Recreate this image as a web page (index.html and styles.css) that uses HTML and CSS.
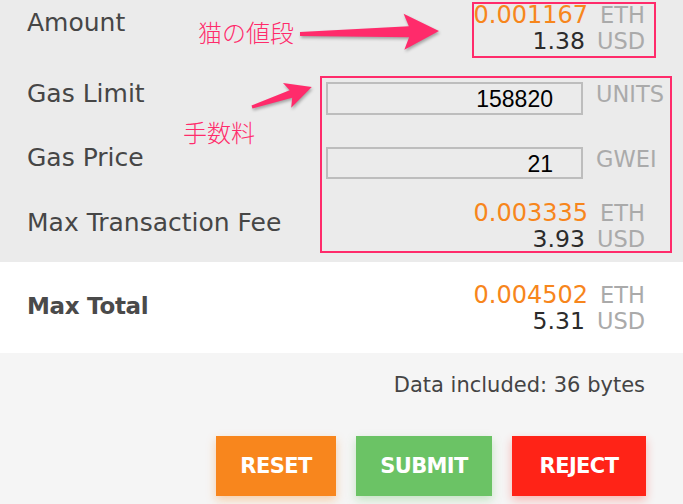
FILE: index.html
```html
<!DOCTYPE html>
<html lang="ja">
<head>
<meta charset="utf-8">
<title>Confirm Transaction</title>
<link rel="stylesheet" href="styles.css">
</head>
<body>
<div class="page">
  <section class="details">
    <div class="row row-amount">
      <div class="label">Amount</div>
      <div class="values">
        <div class="line"><span class="eth">0.001167</span><span class="unit">ETH</span></div>
        <div class="line"><span class="usd">1.38</span><span class="unit">USD</span></div>
      </div>
    </div>
    <div class="row row-input">
      <div class="label">Gas Limit</div>
      <div class="input-group">
        <input class="field" type="text" value="158820">
        <span class="unit unit-side">UNITS</span>
      </div>
    </div>
    <div class="row row-input row-price">
      <div class="label">Gas Price</div>
      <div class="input-group">
        <input class="field" type="text" value="21">
        <span class="unit unit-side">GWEI</span>
      </div>
    </div>
    <div class="row row-fee">
      <div class="label">Max Transaction Fee</div>
      <div class="values">
        <div class="line"><span class="eth">0.003335</span><span class="unit">ETH</span></div>
        <div class="line"><span class="usd">3.93</span><span class="unit">USD</span></div>
      </div>
    </div>
  </section>

  <section class="total">
    <div class="label label-bold">Max Total</div>
    <div class="values values-total">
      <div class="line"><span class="eth">0.004502</span><span class="unit">ETH</span></div>
      <div class="line"><span class="usd">5.31</span><span class="unit">USD</span></div>
    </div>
  </section>

  <section class="footer">
    <div class="data-info">Data included: 36 bytes</div>
    <div class="buttons">
      <button class="btn btn-reset">RESET</button>
      <button class="btn btn-submit">SUBMIT</button>
      <button class="btn btn-reject">REJECT</button>
    </div>
  </section>

  <!-- annotation layer -->
  <div class="note-box note-box-amount"></div>
  <div class="note-box note-box-fee"></div>
  <div class="note-text note-price">猫の値段</div>
  <div class="note-text note-fee">手数料</div>
  <svg class="arrows" width="683" height="504" viewBox="0 0 683 504">
    <g transform="translate(300,34) rotate(-1.2)">
      <polygon points="0,-2 109,-5.5 104,-18 139,0 104,18 109,5.5 0,2" />
    </g>
    <g transform="translate(252,107) rotate(-18.43)">
      <polygon points="0,-1.5 41,-4 37,-13 63,0 37,13 41,4 0,1.5" />
    </g>
  </svg>
</div>
</body>
</html>
```

FILE: styles.css
```css
html, body {
  margin: 0;
  padding: 0;
}

body {
  font-family: "DejaVu Sans", "Noto Sans", sans-serif;
  color: #444444;
  background: #f5f5f5;
}

.page {
  position: relative;
  width: 683px;
  height: 504px;
  overflow: hidden;
}

/* ---------- details ---------- */
.details {
  background: #ebebeb;
  height: 262px;
  padding: 0 38px 0 27px;
  box-sizing: border-box;
}

.row {
  display: flex;
  justify-content: space-between;
  align-items: flex-start;
  height: 64px;
}

.row-amount {
  height: 70px;
}

.label {
  font-size: 25px;
  line-height: 30px;
  color: #464646;
  margin-top: 9px;
  white-space: nowrap;
}

.row-amount .label {
  margin-top: 8px;
}

.row-fee .label {
  margin-top: 10px;
}

.values {
  text-align: right;
  margin-top: 2px;
}

.row-fee .values {
  margin-top: 2px;
}

.line {
  line-height: 26px;
  height: 26px;
  white-space: nowrap;
}

.eth {
  font-size: 24px;
  color: #f7861c;
  line-height: 26px;
}

.usd {
  font-size: 23.5px;
  color: #2b2b2b;
  line-height: 26px;
}

.unit {
  font-size: 22.5px;
  color: #aaaaaa;
  margin-left: 12px;
  line-height: 26px;
}

.input-group {
  display: flex;
  align-items: flex-start;
  width: 319px;
  margin-top: 12px;
}

.row-price .input-group {
  margin-top: 13px;
}

.field {
  width: 257px;
  height: 33px;
  box-sizing: border-box;
  border: 2px solid #bdbdbd;
  background: transparent;
  padding: 2px 28px 0 8px;
  margin: 0;
  text-align: right;
  font-family: "Liberation Sans", Arial, sans-serif;
  font-size: 23px;
  color: #000000;
  outline: none;
}

.row-price .field {
  height: 32px;
}

.unit-side {
  margin-left: 13px;
  margin-top: 0;
  line-height: 25px;
  white-space: nowrap;
}

/* ---------- total ---------- */
.total {
  background: #ffffff;
  height: 91px;
  padding: 0 38px 0 27px;
  box-sizing: border-box;
  display: flex;
  justify-content: space-between;
  align-items: flex-start;
}

.label-bold {
  font-weight: bold;
  font-size: 23px;
  letter-spacing: -0.3px;
  color: #4a4a4a;
  margin-top: 29px;
}

.values-total {
  margin-top: 20px;
}

/* ---------- footer ---------- */
.footer {
  background: #f5f5f5;
  height: 151px;
  padding: 20px 37px 0 0;
  box-sizing: border-box;
}

.data-info {
  text-align: right;
  font-size: 21px;
  line-height: 25px;
  color: #444444;
  padding-right: 1px;
}

.buttons {
  display: flex;
  justify-content: flex-end;
  gap: 20px;
  margin-top: 38px;
}

.btn {
  height: 60px;
  border: none;
  margin: 0;
  padding: 0;
  font-family: "DejaVu Sans", sans-serif;
  font-weight: bold;
  font-size: 21px;
  letter-spacing: -0.6px;
  color: #ffffff;
  cursor: pointer;
}

.btn-reset {
  width: 120px;
  background: #f8861d;
  box-shadow: 0 4px 9px rgba(248, 134, 29, 0.35);
}

.btn-submit {
  width: 136px;
  background: #6bc365;
  box-shadow: 0 4px 9px rgba(107, 195, 101, 0.35);
}

.btn-reject {
  width: 134px;
  background: #ff2317;
  box-shadow: 0 4px 9px rgba(255, 35, 23, 0.3);
}

/* ---------- annotations ---------- */
.note-box {
  position: absolute;
  border: 2px solid #ff2b6b;
  box-sizing: border-box;
}

.note-box-amount {
  left: 472px;
  top: 2px;
  width: 184px;
  height: 56px;
}

.note-box-fee {
  left: 320px;
  top: 76px;
  width: 352px;
  height: 177px;
}

.note-text {
  position: absolute;
  font-family: "Noto Sans CJK JP", sans-serif;
  font-weight: 300;
  font-size: 24px;
  line-height: 24px;
  color: #ff2b6b;
  white-space: nowrap;
}

.note-price {
  left: 198px;
  top: 20px;
}

.note-fee {
  left: 183px;
  top: 120px;
}

.arrows {
  position: absolute;
  left: 0;
  top: 0;
  pointer-events: none;
  fill: #ff2b6b;
  filter: drop-shadow(1px 2px 1.5px rgba(0, 0, 0, 0.3));
}
```
